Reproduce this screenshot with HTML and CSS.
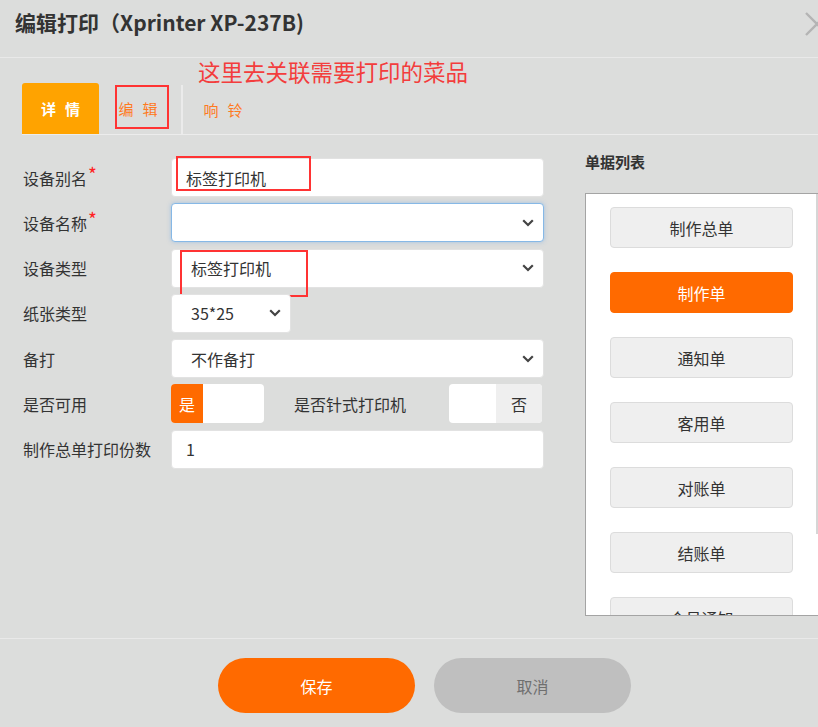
FILE: index.html
```html
<!DOCTYPE html>
<html lang="zh">
<head>
    <meta charset="UTF-8">
    <meta name="viewport" content="width=device-width, initial-scale=1.0">
    <title>编辑打印</title>
    <link rel="stylesheet" href="styles.css">
</head>
<body>
    <!-- 标题栏 -->
    <div class="dialog-header">
        <h1>编辑打印（Xprinter XP-237B)</h1>
        <svg class="close" width="26" height="26" viewBox="0 0 26 26">
            <path d="M2 2 L24 24 M24 2 L2 24" stroke="#b4b4b4" stroke-width="2.4" fill="none"/>
        </svg>
    </div>

    <!-- 选项卡 -->
    <div class="tabs-area">
        <div class="note">这里去关联需要打印的菜品</div>
        <div class="tabs">
            <div class="tab active">详情</div>
            <div class="tab marked">编辑</div>
            <div class="tab split">响铃</div>
        </div>
    </div>

    <div class="content">
        <!-- 表单 -->
        <div class="form">
            <div class="form-row">
                <label>设备别名<span class="star">*</span></label>
                <div class="input wide">标签打印机<span class="mark mark-1"></span></div>
            </div>
            <div class="form-row">
                <label>设备名称<span class="star">*</span></label>
                <div class="select wide focused">
                    <span></span>
                    <svg width="12" height="8" viewBox="0 0 12 8"><path d="M1.2 1.2 L6 6 L10.8 1.2" stroke="#444" stroke-width="2.2" fill="none"/></svg>
                </div>
            </div>
            <div class="form-row">
                <label>设备类型</label>
                <div class="select wide">
                    <span>标签打印机</span>
                    <svg width="12" height="8" viewBox="0 0 12 8"><path d="M1.2 1.2 L6 6 L10.8 1.2" stroke="#444" stroke-width="2.2" fill="none"/></svg>
                    <span class="mark mark-2"></span>
                </div>
            </div>
            <div class="form-row">
                <label>纸张类型</label>
                <div class="select small">
                    <span>35*25</span>
                    <svg width="12" height="8" viewBox="0 0 12 8"><path d="M1.2 1.2 L6 6 L10.8 1.2" stroke="#444" stroke-width="2.2" fill="none"/></svg>
                </div>
            </div>
            <div class="form-row">
                <label>备打</label>
                <div class="select wide">
                    <span>不作备打</span>
                    <svg width="12" height="8" viewBox="0 0 12 8"><path d="M1.2 1.2 L6 6 L10.8 1.2" stroke="#444" stroke-width="2.2" fill="none"/></svg>
                </div>
            </div>
            <div class="form-row">
                <label>是否可用</label>
                <div class="switch">
                    <span class="sw-on">是</span>
                    <span class="sw-blank"></span>
                </div>
                <label class="inline-label">是否针式打印机</label>
                <div class="switch">
                    <span class="sw-blank short"></span>
                    <span class="sw-off">否</span>
                </div>
            </div>
            <div class="form-row">
                <label>制作总单打印份数</label>
                <div class="input wide">1</div>
            </div>
        </div>

        <!-- 单据列表 -->
        <div class="bill-column">
            <div class="bill-title">单据列表</div>
            <div class="bill-panel">
                <div class="bill-btn">制作总单</div>
                <div class="bill-btn active">制作单</div>
                <div class="bill-btn">通知单</div>
                <div class="bill-btn">客用单</div>
                <div class="bill-btn">对账单</div>
                <div class="bill-btn">结账单</div>
                <div class="bill-btn">会员通知</div>
                <div class="scroll-thumb"></div>
            </div>
        </div>
    </div>

    <!-- 底部按钮 -->
    <div class="dialog-footer">
        <div class="btn btn-save">保存</div>
        <div class="btn btn-cancel">取消</div>
    </div>
</body>
</html>
```

FILE: styles.css
```css
body {
    margin: 0;
    width: 818px;
    height: 727px;
    overflow: hidden;
    background-color: #dcdddc;
    font-family: "Noto Sans CJK SC", "Microsoft YaHei", sans-serif;
    color: #333;
    position: relative;
}
.dialog-header {
    height: 57px;
    border-bottom: 1px solid #e9e9e9;
    padding-left: 15px;
    position: relative;
}
.dialog-header h1 {
    margin: 0;
    font-size: 21px;
    font-weight: bold;
    line-height: 44px;
    color: #333;
}
.dialog-header .close {
    position: absolute;
    left: 804px;
    top: 11px;
}
.tabs-area {
    position: relative;
    padding: 25px 0 0 22px;
}
.note {
    position: absolute;
    left: 198px;
    top: 0;
    font-size: 22.5px;
    line-height: 26px;
    color: #f33d3d;
}
.tabs {
    display: flex;
    height: 51px;
    border-bottom: 1px solid #ececec;
}
.tab {
    width: 80px;
    display: flex;
    align-items: center;
    justify-content: center;
    font-size: 15px;
    letter-spacing: 9px;
    padding-left: 9px;
    box-sizing: border-box;
    color: #ff7a1f;
    position: relative;
}
.tab.active {
    width: 77px;
    background-color: #ffa300;
    color: #fff;
    font-weight: bold;
    border-radius: 3px 3px 0 0;
}
.tab.marked {
    width: 82px;
    padding-left: 5px;
}
.tab.marked::after {
    content: "";
    position: absolute;
    left: 16px;
    top: 2px;
    width: 50px;
    height: 40px;
    border: 2px solid #f33;
}
.tab.split {
    width: 82px;
    border-left: 2px solid #ebebeb;
    margin-top: 2px;
}
.content {
    display: flex;
    height: 503px;
    padding: 23px 0 0 23px;
    box-sizing: border-box;
}
.form {
    width: 521px;
}
.form-row {
    display: flex;
    align-items: center;
    height: 39px;
    margin-bottom: 6.3px;
}
.form-row label {
    width: 148px;
    font-size: 16px;
    flex-shrink: 0;
}
.star {
    color: #f22;
    font-size: 19px;
    line-height: 10px;
    position: relative;
    top: -3px;
    margin-left: 1px;
}
.input,
.select {
    height: 39px;
    box-sizing: border-box;
    background-color: #fff;
    border: 1px solid #e2e2e2;
    border-radius: 4px;
    font-size: 16px;
    display: flex;
    align-items: center;
    position: relative;
}
.input {
    padding-left: 14px;
}
.select {
    justify-content: space-between;
    padding: 0 9px 0 19px;
}
.wide {
    width: 373px;
}
.small {
    width: 120px;
}
.select.focused {
    border-color: #86b8e6;
    box-shadow: 0 0 4px rgba(110, 165, 230, 0.5);
}
.mark {
    position: absolute;
    border: 2px solid #f33;
}
.mark-1 {
    left: 4px;
    top: -3px;
    width: 131px;
    height: 31px;
}
.mark-2 {
    left: 8px;
    top: 0;
    width: 124px;
    height: 43px;
}
.switch {
    display: flex;
    width: 93px;
    height: 39px;
    border-radius: 4px;
    overflow: hidden;
    background-color: #fff;
    font-size: 16px;
    flex-shrink: 0;
}
.sw-on {
    width: 32px;
    background-color: #ff6a00;
    color: #fff;
    display: flex;
    align-items: center;
    justify-content: center;
}
.sw-blank {
    flex: 1;
}
.sw-blank.short {
    flex: none;
    width: 47px;
}
.sw-off {
    flex: 1;
    background-color: #efefef;
    display: flex;
    align-items: center;
    justify-content: center;
}
.form-row .inline-label {
    width: 155px;
    margin-left: 30px;
}
.bill-column {
    margin-left: 41px;
    margin-top: -23px;
    flex: 1;
}
.bill-title {
    font-size: 15px;
    font-weight: bold;
    line-height: 20px;
    padding-top: 17px;
    height: 58px;
    box-sizing: border-box;
}
.bill-panel {
    height: 423px;
    width: 260px;
    box-sizing: border-box;
    background-color: #fff;
    border: 1px solid #a4a4a4;
    border-right: none;
    padding: 13px 0 0 24px;
    overflow: hidden;
    position: relative;
}
.bill-btn {
    width: 183px;
    height: 41px;
    box-sizing: border-box;
    background-color: #efefef;
    border: 1px solid #dcdcdc;
    border-radius: 4px;
    display: flex;
    align-items: center;
    justify-content: center;
    font-size: 16px;
    color: #333;
    margin-bottom: 24px;
}
.bill-btn.active {
    background-color: #ff6a00;
    border-color: #ff6a00;
    color: #fff;
}
.scroll-thumb {
    position: absolute;
    left: 230px;
    top: 0;
    width: 3px;
    height: 340px;
    background-color: #d6d6d6;
}
.dialog-footer {
    border-top: 1px solid #e9e9e9;
    display: flex;
    justify-content: center;
    gap: 19px;
    padding: 19px 0 0 31px;
}
.btn {
    width: 197px;
    height: 55px;
    border-radius: 28px;
    display: flex;
    align-items: center;
    justify-content: center;
    font-size: 16px;
}
.btn-save {
    background-color: #ff6a00;
    color: #fff;
}
.btn-cancel {
    background-color: #bfbfbf;
    color: #6f6f6f;
}
```
